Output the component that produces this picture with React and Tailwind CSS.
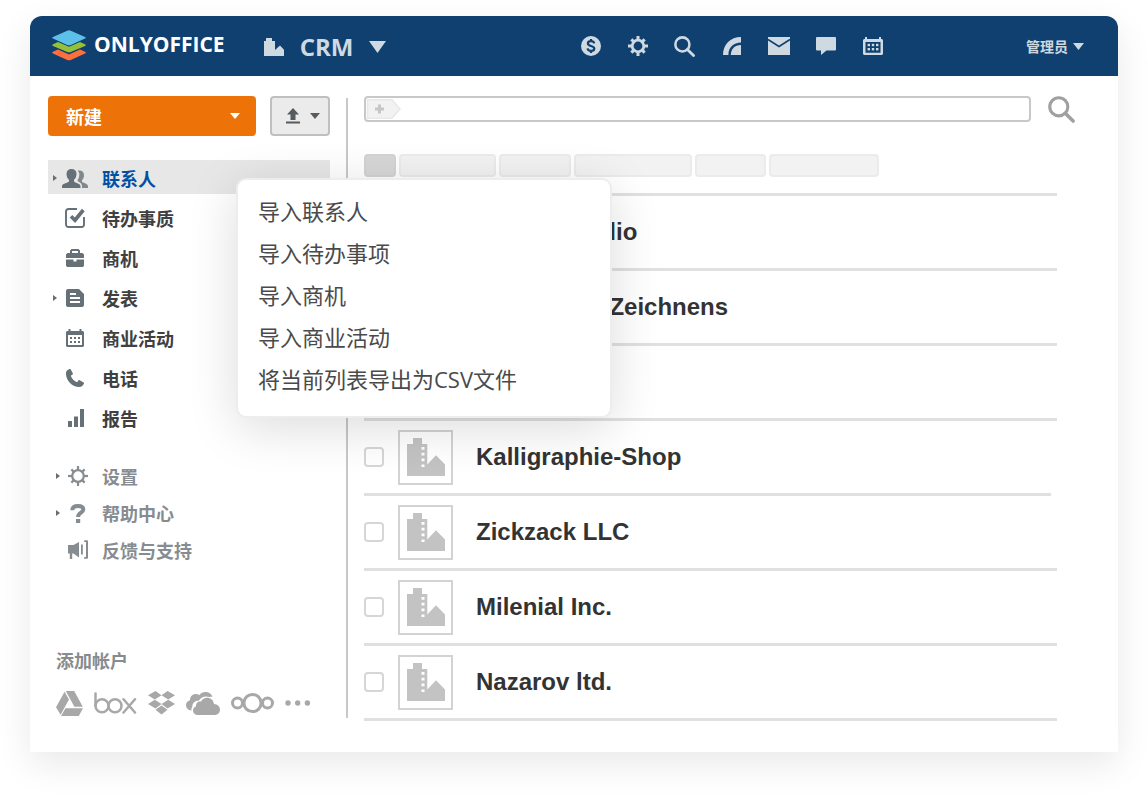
import React from 'react';

const TEETH = [0, 45, 90, 135, 180, 225, 270, 315];

function Gear({ size, ring, tooth, toothLength, radius }) {
  const c = size / 2;
  return (
    <svg width={size} height={size} viewBox={`0 0 ${size} ${size}`} aria-hidden="true">
      <circle cx={c} cy={c} r={radius} fill="none" stroke="currentColor" strokeWidth={ring} />
      {TEETH.map((a) => (
        <rect
          key={a}
          x={c - tooth / 2}
          y={a % 90 === 0 ? 0 : 0.6}
          width={tooth}
          height={toothLength}
          fill="currentColor"
          transform={`rotate(${a} ${c} ${c})`}
        />
      ))}
    </svg>
  );
}

function Logo() {
  return (
    <svg width="34" height="31" viewBox="0 0 34 31" aria-hidden="true">
      <path d="M1 21.8 6 19.6 17 24.4 28 19.6 33 21.8Q34.6 22.7 33 23.5L18.8 29.9Q17 30.7 15.2 29.9L1 23.5Q-.6 22.7 1 21.8Z" fill="#ff6f3d" />
      <path d="M1 14.2 6 12 17 16.8 28 12 33 14.2Q34.6 15.1 33 15.9L18.8 22.1Q17 22.9 15.2 22.1L1 15.9Q-.6 15.1 1 14.2Z" fill="#95c038" />
      <path d="M1 6.9 15.2.7Q17-.1 18.8.7L33 6.9Q34.6 7.8 33 8.6L18.8 15Q17 15.8 15.2 15L1 8.6Q-.6 7.8 1 6.9Z" fill="#5dc0e8" />
    </svg>
  );
}

function CrmIcon() {
  return (
    <svg width="20" height="18" viewBox="0 0 20 18" fill="currentColor" aria-hidden="true">
      <path d="M0 3h2V0h6v3h3v9l5-4.5 4 4.2V18H0z" />
    </svg>
  );
}

function Caret({ width, height }) {
  return (
    <svg width={width} height={height} viewBox="0 0 10 6" preserveAspectRatio="none" fill="currentColor" aria-hidden="true">
      <path d="M0 0h10L5 6z" />
    </svg>
  );
}

function DollarIcon() {
  return (
    <svg width="20" height="20" viewBox="0 0 20 20" aria-hidden="true">
      <circle cx="10" cy="10" r="10" fill="currentColor" />
      <path d="M13.2 7.4C12.9 5.9 11.7 5.2 10 5.2c-1.9 0-3.1.9-3.1 2.3 0 3.2 6.4 1.7 6.4 5 0 1.5-1.3 2.4-3.3 2.4-1.9 0-3.2-.8-3.4-2.5M10 3v2.6M10 14.5V17" fill="none" stroke="#10406f" strokeWidth="2.2" />
    </svg>
  );
}

function SearchIcon({ size, stroke }) {
  return (
    <svg width={size} height={size} viewBox="0 0 20 20" fill="none" stroke="currentColor" strokeWidth={stroke} aria-hidden="true">
      <circle cx="8" cy="8" r="6.7" />
      <path d="m12.8 12.8 5.8 5.8" strokeLinecap="round" strokeWidth={stroke + 0.3} />
    </svg>
  );
}

function FeedIcon() {
  return (
    <svg width="18" height="18" viewBox="0 0 18 18" fill="currentColor" aria-hidden="true">
      <path d="M0 18C0 7.5 7.5 0 18 0v5.6C10.5 5.6 5.4 10.5 5.4 18z" />
      <path d="M7.8 18C7.8 11.8 11.8 7.9 18 7.9V18z" />
    </svg>
  );
}

function MailIcon() {
  return (
    <svg width="22" height="18" viewBox="0 0 22 18" aria-hidden="true">
      <path d="M0 0h22v18H0z" fill="currentColor" />
      <path d="m0 2.5 11 7 11-7" fill="none" stroke="#10406f" strokeWidth="1.5" />
    </svg>
  );
}

function ChatIcon() {
  return (
    <svg width="20" height="18" viewBox="0 0 20 18" fill="currentColor" aria-hidden="true">
      <path d="M1 0h18a1 1 0 0 1 1 1v11.5a1 1 0 0 1-1 1h-8.500L5 18v-4.500H1a1 1 0 0 1-1-1V1a1 1 0 0 1 1-1z" />
    </svg>
  );
}

function CalendarIcon() {
  return (
    <svg width="20" height="18" viewBox="0 0 20 18" fill="currentColor" aria-hidden="true">
      <path fillRule="evenodd" d="M1 2h1V0h2v2h12V0h2v2h1l1 1v14l-1 1H1l-1-1V3zm1.500 3v10.800h15V5z" />
      {[4.6, 8.8, 13].map((x) => [6.8, 11].map((y) => <rect key={`${x}-${y}`} x={x} y={y} width="2.4" height="2.4" />))}
    </svg>
  );
}

function UploadIcon() {
  return (
    <svg width="14" height="16" viewBox="0 0 14 16" fill="currentColor" aria-hidden="true">
      <path d="M7 0l6 6.500H9.500V12h-5V6.500H1zM0 13.500h14V15.500H0z" />
    </svg>
  );
}

function PeopleIcon() {
  return (
    <svg width="26" height="19" viewBox="0 0 26 19" fill="currentColor" aria-hidden="true">
      <path d="M4.500 4.800C4.500 1.600 6.500 0 9.500 0s5 1.600 5 4.800c0 3-1.100 4.900-2.500 6v1.400c0 1.600 6.500 1.800 6.500 5V19H0v-1.800c0-3.200 7-3.400 7-5v-1.400c-1.400-1.100-2.500-3-2.500-6z" />
      <path opacity=".8" d="M15.500 1.800c4-.9 6.500 1 6.500 4.300 0 2.500-.8 4.200-2 5.100v1.400c0 1.400 6 1.900 6 4.600V19h-6v-2c0-2-1.500-3.600-4.300-4.800v-1.400c1-1.200 1.600-3.200 1.600-5.500 0-1.400-.6-2.600-1.800-3.500z" />
    </svg>
  );
}

function TaskIcon() {
  return (
    <svg width="20" height="20" viewBox="0 0 20 20" fill="none" stroke="currentColor" aria-hidden="true">
      <path d="M12 1H3.500A2.500 2.500 0 0 0 1 3.500v13A2.500 2.500 0 0 0 3.500 19h13a2.500 2.500 0 0 0 2.500-2.500V9" strokeWidth="1.9" />
      <path d="m6 8.200 4 4L18.300 2" strokeWidth="3.7" />
    </svg>
  );
}

function BriefcaseIcon() {
  return (
    <svg width="18" height="18" viewBox="0 0 18 18" fill="currentColor" aria-hidden="true">
      <path fillRule="evenodd" d="M4 4V1.500L5.500 0h7L14 1.500V4h2.500L18 5.500V9H0V5.500L1.500 4zm2 0h6V2H6z" />
      <path d="M0 10.500h7.500V12.500h3v-2H18v6L17 18H1l-1-1.500z" />
    </svg>
  );
}

function DocIcon() {
  return (
    <svg width="18" height="18" viewBox="0 0 18 18" fill="currentColor" aria-hidden="true">
      <path fillRule="evenodd" d="M2 0h11l5 5v11a2 2 0 0 1-2 2H2a2 2 0 0 1-2-2V2a2 2 0 0 1 2-2zm2 4v2h6V4zm0 4v2h10V8zm0 4v2h10v-2z" />
    </svg>
  );
}

function SmallCalendarIcon() {
  return (
    <svg width="18" height="18" viewBox="0 0 18 18" fill="currentColor" aria-hidden="true">
      <path fillRule="evenodd" d="M1 2h1.500V0h2v2h9V0h2v2H17l1 1v14l-1 1H1l-1-1V3zm1 4v10h14V6z" />
      {[4, 8, 12].map((x) => [8, 12].map((y) => <rect key={`${x}-${y}`} x={x} y={y} width="2" height="2" />))}
    </svg>
  );
}

function PhoneIcon() {
  return (
    <svg width="18" height="18" viewBox="0 0 18 18" fill="currentColor" aria-hidden="true">
      <path d="M1 1.600 3.300 0c.5-.3 1-.2 1.300.3l2.200 4c.3.5.1 1-.3 1.300L4.800 6.800c.8 2.800 3.500 5.600 6.400 6.400l1.200-1.700c.3-.4.8-.6 1.300-.3l3.900 2.200c.5.3.6.8.3 1.300-1.100 2-2.500 3.300-4.700 3.300C6.400 18 0 11.500 0 4.700 0 3.300.2 2.400 1 1.600z" />
    </svg>
  );
}

function BarsIcon() {
  return (
    <svg width="18" height="18" viewBox="0 0 18 18" fill="currentColor" aria-hidden="true">
      <path d="M2 12h4v6H2zM8 7.500h4V18H8zM14 0h4v18h-4z" />
    </svg>
  );
}

function QuestionIcon() {
  return (
    <svg width="16" height="19" viewBox="0 0 16 19" aria-hidden="true">
      <path d="M2.300 6.200C2.400 3.300 4.600 2.100 8 2.100c3.300 0 5.300 1.200 5.300 3.500 0 3.300-5.200 2.900-5.200 7.400" fill="none" stroke="currentColor" strokeWidth="4" />
      <path d="M6 15h4.200v4H6z" fill="currentColor" />
    </svg>
  );
}

function MegaphoneIcon() {
  return (
    <svg width="20" height="20" viewBox="0 0 20 20" fill="currentColor" aria-hidden="true">
      <path d="M0 5h5.500L11 2v15.500L5.500 13.500H4.200V19H1.800v-5.500H0z" />
      <path d="M13 4.500h1.800v10H13zM16.200 2V.2H19a1 1 0 0 1 1 1v16.600a1 1 0 0 1-1 1h-2.800V17H18V2z" />
    </svg>
  );
}

function DriveIcon() {
  return (
    <svg width="27" height="25" viewBox="0 0 27 25" fill="currentColor" aria-hidden="true">
      <path d="M8.600.8 13 8.600 4.600 23.800 0 16.200zM9.800 0h8.400l8.600 15.700h-8.400zM9.500 17.200H27L22.800 25H5z" />
    </svg>
  );
}

function BoxIcon() {
  return (
    <svg width="43" height="22" viewBox="0 0 43 22" fill="none" stroke="currentColor" strokeWidth="2.5" strokeLinecap="round" role="img" aria-label="box">
      <path d="M1.500 1.500v12.500" />
      <circle cx="8" cy="13.800" r="6.500" />
      <circle cx="21" cy="13.800" r="6.500" />
      <path d="M29.500 7.200 41 20.500M41 7.200 29.500 20.500" />
    </svg>
  );
}

function DropboxIcon() {
  return (
    <svg width="27" height="24" viewBox="0 0 27 24" fill="currentColor" aria-hidden="true">
      <path d="M7.500 0l6 4.200-6.700 4.300L0 4.200zM19.500 0 27 4.200l-6.800 4.300-6.700-4.300zM6.800 8.700l6.700 4.300-6 4.400L0 13zM20.200 8.700 27 13l-7.500 4.400-6-4.400zM13.500 14.400l6 4.300-6 4.800-6-4.800z" />
    </svg>
  );
}

function OneDriveIcon() {
  return (
    <svg width="34" height="23" viewBox="0 0 34 23" fill="currentColor" aria-hidden="true">
      <path d="M5.500 18.500C2 18 0 16 0 13.200c0-2.600 1.500-4.300 4-5C4 4.500 6.500 2 9.800 2c1.400 0 2.500.3 3.500 1C14.800 1 17 0 19.500 0c3.300 0 6 1.800 7 5-1.600-.3-2.500-.2-3.200.1-3.500-1.600-8-.5-10.300 3.500C8.500 8.700 6 11.800 6.400 14.800c-.9 1-1.200 2.400-.9 3.700z" />
      <path d="M12 23c-3 0-5-1.900-5-4.500 0-2.200 1.400-3.600 3-4-.3-3.300 2-5.500 5-5 1.500-2.600 3.500-3.800 6-3.800 3.800 0 6.600 2.500 6.900 6.200C31.500 12 34 14.300 34 17.500c0 3.300-2.400 5.500-5.500 5.500z" />
    </svg>
  );
}

function NextcloudIcon() {
  return (
    <svg width="43" height="22" viewBox="0 0 43 22" fill="none" stroke="currentColor" strokeWidth="3" aria-hidden="true">
      <circle cx="21.500" cy="11" r="8.600" />
      <circle cx="6.500" cy="11" r="5" />
      <circle cx="36.500" cy="11" r="5" />
    </svg>
  );
}

function DotsIcon() {
  return (
    <svg width="26" height="6" viewBox="0 0 26 6" fill="currentColor" aria-hidden="true">
      <circle cx="3" cy="3" r="2.700" />
      <circle cx="12.700" cy="3" r="2.700" />
      <circle cx="22.400" cy="3" r="2.700" />
    </svg>
  );
}

function CompanyIcon() {
  return (
    <svg width="38" height="38" viewBox="0 0 38 38" aria-hidden="true">
      <path fill="#c3c3c3" d="M0 6h6V0h9v6h5.300v20.500l8.700-9.200 9 9.200V38H0z" />
      <path fill="#fff" d="M14.500 9h3v2.700h-3zM14.500 14.800h3v2.700h-3zM14.500 20.600h3v2.700h-3zM14.500 26.400h3v2.700h-3z" />
    </svg>
  );
}

const TOP_LINKS = [
  { label: 'Payments', icon: <DollarIcon /> },
  { label: 'Settings', icon: <Gear size={20} ring={2.8} tooth={3} toothLength={4} radius={5.8} /> },
  { label: 'Search', icon: <SearchIcon size={21} stroke={2.4} /> },
  { label: 'Feed', icon: <FeedIcon /> },
  { label: 'Mail', icon: <MailIcon /> },
  { label: 'Talk', icon: <ChatIcon /> },
  { label: 'Calendar', icon: <CalendarIcon /> },
];

const MAIN_NAV = [
  { label: '联系人', icon: <PeopleIcon />, arrow: true, active: true },
  { label: '待办事质', icon: <TaskIcon /> },
  { label: '商机', icon: <BriefcaseIcon /> },
  { label: '发表', icon: <DocIcon />, arrow: true },
  { label: '商业活动', icon: <SmallCalendarIcon /> },
  { label: '电话', icon: <PhoneIcon /> },
  { label: '报告', icon: <BarsIcon /> },
];

const EXTRA_NAV = [
  { label: '设置', icon: <Gear size={20} ring={2.2} tooth={2.2} toothLength={4} radius={5.8} />, arrow: true },
  { label: '帮助中心', icon: <QuestionIcon />, arrow: true },
  { label: '反馈与支持', icon: <MegaphoneIcon /> },
];

const ACCOUNTS = [
  { label: 'Google Drive', icon: <DriveIcon /> },
  { label: 'Box', icon: <BoxIcon /> },
  { label: 'Dropbox', icon: <DropboxIcon /> },
  { label: 'OneDrive', icon: <OneDriveIcon /> },
  { label: 'Nextcloud', icon: <NextcloudIcon /> },
  { label: 'More', icon: <DotsIcon /> },
];

const MENU = ['导入联系人', '导入待办事项', '导入商机', '导入商业活动', '将当前列表导出为CSV文件'];

const COMPANIES = [
  { id: 1, name: 'Design Studio' },
  { id: 2, name: 'Schule des Zeichnens' },
  { id: 3, name: '' },
  { id: 4, name: 'Kalligraphie-Shop', short: true },
  { id: 5, name: 'Zickzack LLC' },
  { id: 6, name: 'Milenial Inc.' },
  { id: 7, name: 'Nazarov ltd.' },
];

function Arrow({ shown }) {
  return (
    <svg width="4" height="6" viewBox="0 0 4 6" className={shown ? 'text-[#666e73]' : 'invisible'} aria-hidden="true">
      <path d="M0 0l4 3-4 3z" fill="currentColor" />
    </svg>
  );
}

function Header() {
  return (
    <header className="flex h-[60px] items-center rounded-t-xl bg-[#10406f] pl-[22px] pr-[34px] text-[#cfd9e2]">
      <a href="#home" className="flex items-center gap-2 pb-[2px] font-['Open_Sans','Noto_Sans_CJK_SC',sans-serif] text-[21px] font-bold text-white">
        <Logo />
        ONLYOFFICE
      </a>
      <button type="button" className="ml-[39px] flex items-center gap-4 pt-[2px] text-2xl font-bold font-['Open_Sans','Noto_Sans_CJK_SC',sans-serif]">
        <CrmIcon />
        CRM
        <Caret width={17} height={12} />
      </button>
      <nav className="ml-auto mr-[130px] flex">
        {TOP_LINKS.map((l) => (
          <a key={l.label} href={`#${l.label.toLowerCase()}`} aria-label={l.label} className="flex w-[47px] justify-center">
            <span className="flex h-5 items-center">{l.icon}</span>
          </a>
        ))}
      </nav>
      <button type="button" className="flex items-center gap-[5px] whitespace-nowrap text-sm font-bold">
        管理员
        <Caret width={11} height={7} />
      </button>
    </header>
  );
}

function ImportMenu() {
  return (
    <div className="relative">
      <button type="button" aria-label="Import" aria-expanded="true" className="flex h-10 w-[60px] items-center justify-end gap-[10px] rounded border-2 border-[#bfbfbf] bg-[#ebebeb] pr-2 text-[#555b5f]">
        <UploadIcon />
        <Caret width={10} height={6} />
      </button>
      <ul className="absolute -left-[34px] top-[82px] z-10 w-[376px] rounded-[10px] border-2 border-[#ededed] bg-white pt-[10px] pb-4 shadow-[0_10px_50px_rgba(0,0,0,0.14)]">
        {MENU.map((m) => (
          <li key={m}>
            <button type="button" className="h-[42px] w-full px-5 text-left font-['Open_Sans','Noto_Sans_CJK_SC',sans-serif] text-[22px] leading-[42px] text-[#4a4a4a]">
              {m}
            </button>
          </li>
        ))}
      </ul>
    </div>
  );
}

function Sidebar() {
  return (
    <aside className="w-[282px] shrink-0">
      <div className="flex justify-between">
        <button type="button" className="flex h-10 w-[208px] items-center justify-between rounded bg-[#ed7309] pl-[18px] pr-4 text-lg font-bold text-white">
          新建
          <Caret width={10} height={6} />
        </button>
        <ImportMenu />
      </div>
      <nav className="mt-6 flex flex-col gap-[6px]">
        {MAIN_NAV.map((n) => (
          <a
            key={n.label}
            href="#section"
            className={`flex h-[34px] items-center pl-[5px] pt-[2px] text-lg font-bold ${n.active ? 'bg-[#e7e7e7] text-[#0050a4]' : 'text-[#404040]'}`}
          >
            <Arrow shown={n.arrow} />
            <span className="ml-[5px] mr-[14px] flex w-[26px] justify-center text-[#657077]">{n.icon}</span>
            <span className="leading-6">{n.label}</span>
          </a>
        ))}
      </nav>
      <nav className="mt-[25px] flex flex-col gap-[3px]">
        {EXTRA_NAV.map((n) => (
          <a key={n.label} href="#extra" className="flex h-[34px] items-center pl-2 text-lg font-bold text-[#868c90]">
            <Arrow shown={n.arrow} />
            <span className="ml-[5px] mr-[11px] flex w-[26px] justify-center">{n.icon}</span>
            <span className="leading-6">{n.label}</span>
          </a>
        ))}
      </nav>
      <section className="mt-[81px] pl-2">
        <h2 className="text-lg font-bold leading-6 text-[#868c90]">添加帐户</h2>
        <div className="mt-[18px] flex h-[26px] items-center gap-[11px] text-[#a8a8a8]">
          {ACCOUNTS.map((a) => (
            <button key={a.label} type="button" aria-label={a.label}>
              {a.icon}
            </button>
          ))}
        </div>
      </section>
    </aside>
  );
}

function SearchBar() {
  return (
    <form className="flex h-[26px] items-center gap-[17px] pr-[43px]" onSubmit={(e) => e.preventDefault()}>
      <div className="flex h-[26px] min-w-0 flex-1 items-center rounded border-2 border-[#c8c8c8] bg-white">
        <button type="button" aria-label="Add filter">
          <svg width="36" height="20" viewBox="0 0 36 20" aria-hidden="true">
            <path d="M1.500.8h24.500l8 9.200-8 9.200H1.500z" fill="#f2f2f2" stroke="#e8e8e8" strokeWidth="1.500" />
            <path d="M12 5.500h3v3h3v3h-3v3h-3v-3H9v-3h3z" fill="#c6c6c6" />
          </svg>
        </button>
        <input type="text" aria-label="Filter contacts" className="h-full min-w-0 flex-1 bg-transparent px-2 text-sm outline-none" />
      </div>
      <button type="submit" aria-label="Search contacts" className="text-[#a0a0a0]">
        <SearchIcon size={27} stroke={2.3} />
      </button>
    </form>
  );
}

function FilterPills() {
  const base = 'h-[23px] rounded border-2 border-[#ebebeb] bg-[#f2f2f2]';
  return (
    <div className="mt-8 flex gap-[3px]">
      <div className="h-[23px] w-8 rounded border-2 border-[#d3d3d3] bg-[#d7d7d7]" />
      <div className={`${base} w-[97px]`} />
      <div className={`${base} w-[72px]`} />
      <div className={`${base} w-[118px]`} />
      <div className={`${base} w-[71px]`} />
      <div className={`${base} w-[110px]`} />
    </div>
  );
}

function CompanyRow({ name, short }) {
  return (
    <li className={`h-[75px] border-b-[3px] border-[#e0e0e0] ${short ? 'mr-[6px]' : ''}`}>
      <label className="flex h-full items-center">
        <input type="checkbox" aria-label={name || 'Company'} className="h-5 w-5 appearance-none rounded border-2 border-[#d6d6d6] bg-white" />
        <span className="ml-[14px] mr-[23px] flex h-[55px] w-[55px] items-center justify-center border-2 border-[#d3d3d3] bg-white">
          <CompanyIcon />
        </span>
        <span className="pb-px font-['Liberation_Sans',sans-serif] text-2xl font-bold text-[#333]">{name}</span>
      </label>
    </li>
  );
}

export default function App() {
  return (
    <div className="min-h-screen bg-white px-[30px] pb-11 pt-4 font-['Noto_Sans_CJK_SC',sans-serif]">
      <div className="rounded-t-xl bg-white shadow-[0_12px_36px_rgba(0,0,0,0.09)]">
        <Header />
        <main className="flex pb-[31px] pl-[18px] pt-5">
          <Sidebar />
          <div className="mx-4 mb-[3px] mt-[2px] w-[2px] shrink-0 bg-[#c8c8c8]" />
          <div className="min-w-0 flex-1">
            <SearchBar />
            <FilterPills />
            <ul className="mr-[61px] mt-4 border-t-[3px] border-[#e0e0e0]">
              {COMPANIES.map((c) => (
                <CompanyRow key={c.id} name={c.name} short={c.short} />
              ))}
            </ul>
          </div>
        </main>
      </div>
    </div>
  );
}
